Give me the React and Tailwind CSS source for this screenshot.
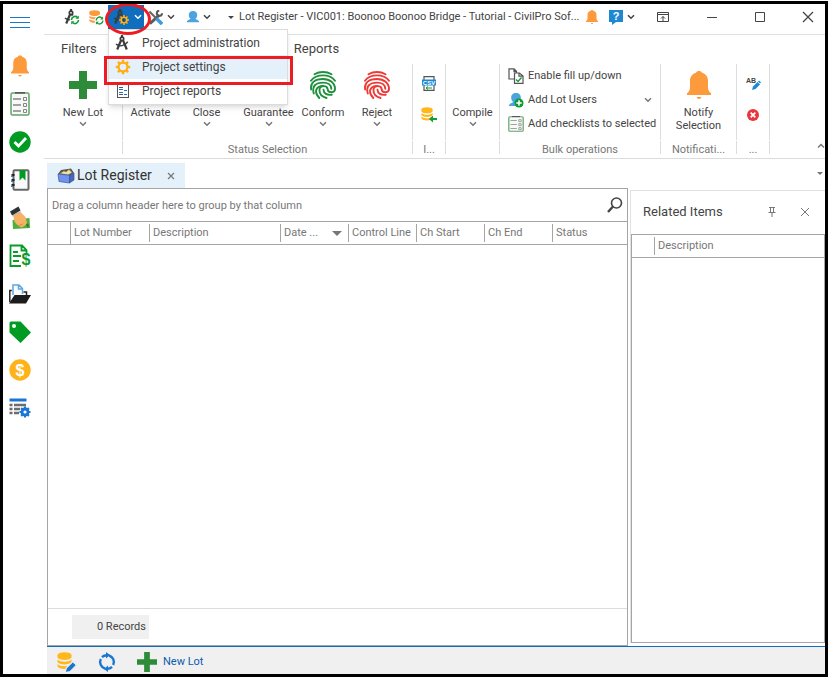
const gridColumns = [
  { label: "", width: "w-[22px]" },
  { label: "Lot Number", width: "w-[79px]", full: true },
  { label: "Description", width: "w-[131px]" },
  { label: "Date ...", width: "w-[68px]", sorted: true },
  { label: "Control Line", width: "w-[68px]" },
  { label: "Ch Start", width: "w-[68px]" },
  { label: "Ch End", width: "w-[68px]" },
  { label: "Status", width: "" },
];

function Chevron({ className = "text-[#444]", up = false }) {
  return (
    <svg viewBox="0 0 8 6" className={`w-2 h-1.5 shrink-0 ${className}`} fill="none" stroke="currentColor" strokeWidth="1.5">
      <path d={up ? "M1 4.5L4 1.5L7 4.5" : "M1 1.2L4 4.2L7 1.2"} />
    </svg>
  );
}

function Caret({ className = "w-[7px] h-1" }) {
  return (
    <svg viewBox="0 0 8 4" preserveAspectRatio="none" className={`shrink-0 ${className}`}>
      <path d="M0 0H8L4 4Z" fill="currentColor" />
    </svg>
  );
}

function Bell({ className }) {
  return (
    <svg viewBox="0 0 24 28" className={className} fill="#fd9a3c">
      <path d="M12 0c1.500 0 2.500.6 3 1.700C19.200 3 21 6 21 10v6c0 3 .8 4.500 3 6.300V24H0v-1.700C2.200 20.500 3 19 3 16v-6c0-4 1.800-7 6-8.300C9.500.6 10.500 0 12 0z" />
      <path d="M9.500 26h5c-.5 1.300-1.500 2-2.500 2s-2-.7-2.500-2z" />
    </svg>
  );
}

function Plus({ className }) {
  return (
    <svg viewBox="0 0 28 28" className={className}>
      <path d="M10 0h8v10h10v8H18v10h-8V18H0v-8h10z" fill="#2e8b3a" />
    </svg>
  );
}

function Compass({ className, children }) {
  return (
    <svg viewBox="0 0 16 16" className={className} fill="none">
      <path d="M7 0v2.500M6.200 5L2.200 14.500M7.900 5l3.900 9.500" stroke="#3c3c3c" strokeWidth="2.200" />
      <circle cx="7" cy="3.800" r="1.700" stroke="#3c3c3c" strokeWidth="1.700" />
      <path d="M1 9.200c3.800 2.600 8.500 1.800 11.800-2.400" stroke="#3c3c3c" strokeWidth="1.500" />
      {children}
    </svg>
  );
}

function Gear({ className, color = "#ffae14" }) {
  return (
    <svg viewBox="0 0 16 16" className={className} fill="none" stroke={color}>
      <circle cx="8" cy="8" r="4.400" strokeWidth="2.200" />
      <path
        d="M8 .8v2.200M8 13v2.200M.8 8H3M13 8h2.200M2.900 2.900l1.600 1.600M11.500 11.500l1.600 1.600M2.900 13.100l1.600-1.600M11.500 4.500l1.600-1.600"
        strokeWidth="2.400"
      />
    </svg>
  );
}

function Database({ className, color = "#ffb71c", children }) {
  return (
    <svg viewBox="0 0 20 20" className={className} fill="none">
      <ellipse cx="7.500" cy="3" rx="7" ry="2.800" fill={color} />
      <path d="M.5 3v2.500C2 8.700 13 8.700 14.500 5.500V3zM.5 7.500V10c1.500 3.200 12.500 3.200 14 0V7.500c-2.500 3-11.500 3-14 0zM.5 12v2.500c1.500 3.200 12.500 3.200 14 0V12c-2.500 3-11.500 3-14 0z" fill={color} />
      {children}
    </svg>
  );
}

function Person({ className, children }) {
  return (
    <svg viewBox="0 0 16 16" className={className}>
      <path d="M8 1c3.200 0 5 2 4.800 5-.1 2-1 3.200-2 4.100.3 1 3.900.9 4.400 3.900H.8c.5-3 4.100-2.900 4.400-3.900-1-.9-1.900-2.100-2-4.100C3 3 4.800 1 8 1z" fill="#4ba3df" />
      {children}
    </svg>
  );
}

function Checklist({ className }) {
  return (
    <svg viewBox="0 0 20 24" preserveAspectRatio="none" className={className} fill="none">
      <rect x="1" y="1" width="18" height="22" rx="1.500" fill="#f7f9f7" stroke="#62a36b" strokeWidth="1.500" />
      <path d="M5 .8h10" stroke="#555" strokeWidth="1.500" />
      <path d="M3 7h8M3 13h8M3 19h8" stroke="#858585" strokeWidth="1.300" />
      <path d="M13.500 5.500h3v3h-3zM13.500 11.500h3v3h-3zM13.500 17.500h3v3h-3z" stroke="#858585" />
    </svg>
  );
}

function ReportIcon({ className }) {
  return (
    <svg viewBox="0 0 14 14" className={className} fill="none">
      <rect x="1.500" y=".5" width="11" height="13" fill="#fff" stroke="#555" />
      <path d="M3 3.500h4M3 10.500h4" stroke="#555" />
      <path d="M3 5.500h4M3 8.500h4M8 6.500h3M8 10.500h3" stroke="#1976d2" />
    </svg>
  );
}

function Fingerprint({ color }) {
  return (
    <svg viewBox="0 0 26 28" className="w-[26px] h-7" fill="none" stroke={color} strokeWidth="1.900" strokeLinecap="round">
      <path d="M4.500 3.200C9.500.3 16.500.3 21.500 3.200" />
      <path d="M1 9.800C6 2.600 20 2.600 25 9.800" />
      <path d="M1.200 18.500C-.2 11.500 5.500 8 13 8c7 0 12 4 12 10 0 4-6.800 4.500-7.300.3-.4-4.300-8-4.300-8.200.5-.2 4.300 3 7.200 7 8.200" />
      <path d="M3.800 22.500C1.500 15 6 11.600 13 11.600c5 0 8.300 2.600 8.300 6.200" />
      <path d="M9.300 27C3.500 20.500 6 15.200 13 15" />
      <path d="M13.500 18.700c.2 3.800 3.500 5.800 8.300 5" />
    </svg>
  );
}

const sidebarItems = [
  { label: "Notifications", icon: <Bell className="w-[18px] h-[22px]" /> },
  { label: "Checklists", icon: <Checklist className="w-5 h-6" /> },
  {
    label: "Approvals",
    icon: (
      <svg viewBox="0 0 22 22" className="w-[22px] h-[22px]" fill="none">
        <circle cx="11" cy="11" r="10.700" fill="#009b22" />
        <path d="M5.500 11l4 4 7.500-8" stroke="#fff" strokeWidth="2.800" />
      </svg>
    ),
  },
  {
    label: "Diary",
    icon: (
      <svg viewBox="0 0 20 22" className="w-5 h-[22px]" fill="none">
        <rect x="3.500" y="1.200" width="15" height="19.500" rx="1" fill="#fafafa" stroke="#686868" strokeWidth="2" />
        <path d="M9.500 1h6v10.500l-3-3-3 3z" fill="#009b22" />
        <path d="M1.500 6h3M1.500 11h3M1.500 16h3" stroke="#222" strokeWidth="1.800" />
        <path d="M1 7.300h2M1 12.300h2M1 17.300h2" stroke="#2b86c5" strokeWidth="1.200" />
      </svg>
    ),
  },
  {
    label: "Payments",
    icon: (
      <svg viewBox="0 0 20 24" className="w-5 h-6">
        <path d="M2.500 14l17-2 .5 10-17 1z" fill="#4caf3f" />
        <path d="M14 15l5 4-1 3z" fill="#2f7d2a" />
        <path d="M3 8.500L10 5.500l5.500 5.500 1.500 6c-1 2-3.500 4-5.500 4.500-3-1-7.500-5-7.500-8z" fill="#f6b266" />
        <path d="M8 20c2-1 4-1 5-2.500" stroke="#d98b3c" fill="none" />
        <path d="M0 5.500L8.500.5 10.500 4.500 2 9.500z" fill="#2d3036" />
        <path d="M2.500 10l8-4.500" stroke="#bbb" strokeWidth="1" />
      </svg>
    ),
  },
  {
    label: "Cost report",
    icon: (
      <svg viewBox="0 0 22 24" className="w-[22px] h-6 overflow-visible" fill="none" stroke="#0b9b2c" strokeWidth="1.800">
        <path d="M12 22H1.500V1.500H13l4.500 4.500v3M12.500 1.500v5h5M4 8h5M4 12h8M4 17h6" />
        <text x="12.500" y="21" fill="#0b9b2c" stroke="none" className="font-['Liberation_Sans'] text-[16px] font-bold">$</text>
      </svg>
    ),
  },
  {
    label: "Documents",
    icon: (
      <svg viewBox="0 0 22 20" className="w-[22px] h-5">
        <path d="M4 11V1h6l3.500 3.500V10M9.500 1v4H14" fill="#fff" stroke="#5aa7e6" strokeWidth="1.500" />
        <path d="M.8 18V6.500h2M14.500 8h3v3" fill="none" stroke="#222" strokeWidth="1.500" />
        <path d="M0 19.500L5.500 11H22l-5 8.500z" fill="#1c1c1c" />
      </svg>
    ),
  },
  {
    label: "Tags",
    icon: (
      <svg viewBox="0 0 22 22" className="w-[22px] h-[22px]">
        <path d="M2 .5h9.500L22 11.500 11.500 22 .5 11.500V2A1.500 1.500 0 0 1 2 .5zM5 3a2 2 0 1 0 0 4 2 2 0 0 0 0-4z" fill="#009b22" fillRule="evenodd" />
      </svg>
    ),
  },
  {
    label: "Costs",
    icon: (
      <svg viewBox="0 0 22 22" className="w-[22px] h-[22px]">
        <circle cx="11" cy="11" r="10.700" fill="#ffb31a" />
        <text x="11" y="16.500" textAnchor="middle" fill="#fff" className="font-['Liberation_Sans'] text-[16px] font-bold">$</text>
      </svg>
    ),
  },
  {
    label: "Register settings",
    icon: (
      <svg viewBox="0 0 22 20" className="w-[22px] h-5" fill="none">
        <path d="M.5 2h17" stroke="#1976d2" strokeWidth="3" />
        <path d="M.5 7h3M5 7h12M.5 11h3M5 11h6M.5 15h3M5 15h5" stroke="#6d6d6d" strokeWidth="2.400" />
        <circle cx="16" cy="14" r="3" stroke="#1976d2" strokeWidth="2.800" />
        <path d="M16 8.500v2.500M16 17v2.500M10.500 14h2.500M19 14h2.500M12.100 10.100l1.500 1.500M18.400 16.400l1.500 1.500M12.100 17.900l1.500-1.500M18.400 11.600l1.500-1.500" stroke="#1976d2" strokeWidth="2.200" />
      </svg>
    ),
  },
];

function Sidebar() {
  return (
    <nav className="w-[41px] shrink-0 flex flex-col items-center pr-[7px]">
      <button aria-label="Menu" className="h-[43px] pb-[7px] shrink-0">
        <svg viewBox="0 0 20 12" className="w-5 h-3" stroke="#1b76c8">
          <path d="M0 1.500h20M0 6.500h20M0 11.500h20" />
        </svg>
      </button>
      {sidebarItems.map((item) => (
        <button key={item.label} aria-label={item.label} className="h-[38px] shrink-0 flex items-center">
          {item.icon}
        </button>
      ))}
    </nav>
  );
}

function ProjectMenu() {
  return (
    <div className="relative w-9 h-6 ml-1 shrink-0">
      <button aria-label="Project" className="w-full h-full bg-[#106ebe] flex items-center gap-1 pl-1">
        <Compass className="w-[18px] h-4">
          <circle cx="11" cy="11" r="2.800" stroke="#ffb31a" strokeWidth="1.600" />
          <path d="M11 6v2M11 14v2M6 11h2M14 11h2M7.500 7.500L9 9M13 13l1.500 1.500M7.500 14.500L9 13M13 9l1.500-1.500" stroke="#ffb31a" strokeWidth="1.500" />
        </Compass>
        <Chevron className="text-white" />
      </button>
      <div className="absolute z-10 -left-[3px] -top-[2px] w-[46px] h-8 rounded-[50%] border-[3px] border-[#ec1c24] pointer-events-none" />
      <div className="absolute left-0 top-full w-[180px] bg-white border border-[#dcdcdc] shadow-md py-px text-[12px] text-[#444]">
        <button className="w-full h-6 flex items-center gap-[11px] pl-1.5">
          <Compass className="w-4 h-4" />
          Project administration
        </button>
        <button className="w-full h-6 flex items-center gap-[11px] pl-1.5 bg-[#e5f1fa]">
          <Gear className="w-4 h-4" />
          Project settings
        </button>
        <button className="w-full h-6 flex items-center gap-[11px] pl-1.5">
          <ReportIcon className="w-4 h-3.5" />
          Project reports
        </button>
        <div className="absolute -left-[5px] top-[26px] w-[189px] h-[29px] border-[3px] border-[#ec1c24] pointer-events-none" />
      </div>
    </div>
  );
}

function TitleBar() {
  return (
    <header className="h-[31px] shrink-0 pb-1 border-b border-[#e1e1e1] flex items-center text-[#444] pl-5">
      <button aria-label="Refresh project">
        <Compass className="w-4 h-4">
          <circle cx="11" cy="11" r="5" fill="#fff" />
          <path d="M7.500 11a3.500 3.500 0 0 1 6-2.500M14.500 11a3.500 3.500 0 0 1-6 2.500" stroke="#159b38" strokeWidth="1.600" />
          <path d="M14.800 6.500v3.300h-3.300zM7.200 15.500v-3.300h3.300z" fill="#159b38" />
        </Compass>
      </button>
      <button aria-label="Refresh data" className="ml-[9px]">
        <Database className="w-[15px] h-[15px]" color="#fd9a3c">
          <circle cx="14" cy="14" r="6.500" fill="#fff" />
          <path d="M9.500 14a4.500 4.500 0 0 1 7.700-3.200M18.500 14a4.500 4.500 0 0 1-7.700 3.200" stroke="#159b38" strokeWidth="1.800" />
          <path d="M18.800 8.500v4h-4zM9.200 19.500v-4h4z" fill="#159b38" />
        </Database>
      </button>
      <ProjectMenu />
      <button aria-label="Tools" className="ml-1 flex items-center gap-1">
        <svg viewBox="0 0 16 16" className="w-[15px] h-[15px]" fill="none">
          <path d="M12 5.500L2 14.500" stroke="#5a5a5a" strokeWidth="3" />
          <path d="M15 3.500a2.800 2.800 0 1 1-3-2.800" stroke="#5a5a5a" strokeWidth="2.200" />
          <path d="M1.500 1.500L9 9" stroke="#666" strokeWidth="2.200" />
          <path d="M9 9l6 6" stroke="#3d9be0" strokeWidth="3.800" />
        </svg>
        <Chevron />
      </button>
      <button aria-label="User" className="ml-[11px] flex items-center gap-[3px]">
        <Person className="w-3.5 h-3.5" />
        <Chevron />
      </button>
      <button aria-label="Customize toolbar" className="ml-[17px]">
        <Caret className="w-1.5 h-[3px]" />
      </button>
      <h1 className="ml-[5px] pt-px flex-1 min-w-0 whitespace-nowrap">
        Lot Register - VIC001: Boonoo Boonoo Bridge - Tutorial - CivilPro Sof...
      </h1>
      <button aria-label="Alerts">
        <Bell className="w-3 h-3.5" />
      </button>
      <button aria-label="Help" className="ml-[11px] flex items-center gap-1">
        <svg viewBox="0 0 14 15" className="w-3.5 h-[15px]">
          <path d="M0 0h14v12H7l-4 3v-3H0z" fill="#1e88d2" />
          <text x="7" y="10" textAnchor="middle" fill="#fff" className="font-['Liberation_Sans'] text-[11px] font-bold">?</text>
        </svg>
        <Chevron />
      </button>
      <button aria-label="Ribbon display options" className="ml-[22px]">
        <svg viewBox="0 0 12 11" className="w-3 h-[11px]" fill="none" stroke="#444">
          <path d="M.5.5h11v9H.5zM.5 2.500h11M6 9V4.500M4 6.500l2-2 2 2" />
        </svg>
      </button>
      <button aria-label="Minimize" className="ml-[37px]">
        <svg viewBox="0 0 12 12" className="w-3 h-3" stroke="#444"><path d="M1 6.500h10" /></svg>
      </button>
      <button aria-label="Maximize" className="ml-9">
        <svg viewBox="0 0 12 12" className="w-3 h-3" fill="none" stroke="#444"><path d="M1.500 1.500h9v9h-9z" /></svg>
      </button>
      <button aria-label="Close" className="ml-9 mr-[11px]">
        <svg viewBox="0 0 12 12" className="w-3 h-3" stroke="#444" strokeWidth="1.300"><path d="M1 1l10 10M11 1L1 11" /></svg>
      </button>
    </header>
  );
}

function RibbonGroup({ title, width, children }) {
  return (
    <section className={`${width} shrink-0 flex flex-col gap-px pt-0.5 pb-1`}>
      <div className="h-[76px] border-r border-[#dcdcdc] flex">{children}</div>
      <h2 className="h-[13px] leading-[18px] border-r border-[#dcdcdc] text-center text-[#777] whitespace-nowrap">{title}</h2>
    </section>
  );
}

function RibbonButton({ label, width = "w-full", icon, arrow = true }) {
  return (
    <button className={`${width} pt-[7px] flex flex-col items-center justify-start`}>
      <span className="h-7 flex items-center">{icon}</span>
      <span className="mt-[7px] mb-0.5 leading-[13px]">{label}</span>
      {arrow && <Chevron className="text-[#777]" />}
    </button>
  );
}

function Ribbon() {
  return (
    <div className="h-[97px] shrink-0 flex border-b border-[#dcdcdc] text-[#444]">
      <RibbonGroup width="w-[79px]">
        <RibbonButton label="New Lot" icon={<Plus className="w-7 h-7" />} />
      </RibbonGroup>
      <RibbonGroup width="w-[290px]" title="Status Selection">
        <RibbonButton label="Activate" width="w-[55px]" arrow={false} />
        <RibbonButton label="Close" width="w-[57px]" />
        <RibbonButton label="Guarantee" width="w-[67px]" />
        <RibbonButton label="Conform" width="w-[42px]" icon={<Fingerprint color="#1f8f3c" />} />
        <RibbonButton label="Reject" width="w-[66px]" icon={<Fingerprint color="#ee3a36" />} />
      </RibbonGroup>
      <RibbonGroup width="w-[33px]" title="I...">
        <div className="w-full flex flex-col items-center gap-4 pt-3">
          <button aria-label="Import CSV">
            <svg viewBox="0 0 14 15" className="w-3.5 h-[15px]" fill="none">
              <path d="M2 .7h10v13.600H2z" fill="#fff" stroke="#555" strokeWidth="1.200" />
              <path d="M0 3.500h14v6H0z" fill="#1e88d2" />
              <text x="7" y="8.600" textAnchor="middle" fill="#fff" className="font-['Liberation_Sans'] text-[6px] font-bold">CSV</text>
              <path d="M4 12h6M6 10.500L4 12l2 1.500" stroke="#159b38" />
            </svg>
          </button>
          <button aria-label="Import from database">
            <Database className="w-4 h-4">
              <path d="M20 15h-6" stroke="#159b38" strokeWidth="2.600" />
              <path d="M15 10.500L10 15l5 4.500z" fill="#159b38" />
            </Database>
          </button>
        </div>
      </RibbonGroup>
      <RibbonGroup width="w-[54px]">
        <RibbonButton label="Compile" />
      </RibbonGroup>
      <RibbonGroup width="w-[161px]" title="Bulk operations">
        <div className="w-full flex flex-col pl-2">
          <button className="h-6 flex items-center gap-1 whitespace-nowrap">
            <svg viewBox="0 0 16 16" className="w-4 h-4" fill="#fff" stroke="#555" strokeWidth="1.200">
              <path d="M1 .8h5l2.500 2.500V11H1zM6 .8v2.800h2.500" />
              <path d="M6.500 5h5L15 8v7.300H6.500zM11 5v3.200h4" />
              <path d="M8 11.500l2 2 3.500-4" fill="none" stroke="#159b38" strokeWidth="1.400" />
            </svg>
            <span className="pt-px">Enable fill up/down</span>
          </button>
          <button className="h-6 flex items-center gap-1 whitespace-nowrap">
            <Person className="w-4 h-4">
              <circle cx="11" cy="11" r="4.500" fill="#0d9b30" />
              <path d="M11 8.300v5.400M8.300 11h5.400" stroke="#fff" strokeWidth="1.500" />
            </Person>
            <span className="pt-px">Add Lot Users</span>
            <Chevron className="text-[#777] ml-auto mr-2" />
          </button>
          <button className="h-6 flex items-center gap-1 whitespace-nowrap">
            <Checklist className="w-4 h-4" />
            <span className="pt-px">Add checklists to selected</span>
          </button>
        </div>
      </RibbonGroup>
      <RibbonGroup width="w-[76px]" title="Notificati...">
        <RibbonButton label={<>Notify<br />Selection</>} arrow={false} icon={<Bell className="w-6 h-7" />} />
      </RibbonGroup>
      <RibbonGroup width="w-[33px]" title="...">
        <div className="w-full flex flex-col items-center gap-[18px] pt-[13px]">
          <button aria-label="Rename">
            <svg viewBox="0 0 15 14" className="w-[15px] h-3.5">
              <text x="0" y="6" fill="#444" className="font-['Liberation_Sans'] text-[7px] font-bold">AB</text>
              <path d="M6 13l1-3.500 4.500-4.500 2.500 2.500L9.500 12z" fill="#1e88d2" />
              <path d="M12 4.500l1-1L15 5.500l-1 1z" fill="#1e88d2" />
            </svg>
          </button>
          <button aria-label="Delete">
            <svg viewBox="0 0 12 12" className="w-3 h-3">
              <circle cx="6" cy="6" r="6" fill="#e8383d" />
              <path d="M3.700 3.700l4.600 4.600M8.300 3.700L3.700 8.300" stroke="#fff" strokeWidth="1.800" />
            </svg>
          </button>
        </div>
      </RibbonGroup>
      <button aria-label="Collapse ribbon" className="ml-auto self-end pb-[9px]">
        <Chevron up className="text-[#777]" />
      </button>
    </div>
  );
}

function TabStrip() {
  return (
    <div className="h-[29px] shrink-0 pt-1 pl-[3px] pr-0.5 flex items-center justify-between text-[#777]">
      <div className="h-[25px] w-[138px] bg-[#e5f1fa] flex items-center pl-2.5">
        <svg viewBox="0 0 18 16" className="w-[18px] h-4">
          <path d="M1 6l3-4 10-1.500L17 5l-4 3z" fill="#59563f" />
          <path d="M3 5.500l4-2.500 2 1 3-2.500 3 3-4 2.500z" fill="#f0e3a8" stroke="#8b8461" strokeWidth=".6" />
          <path d="M1 6l11.500 1.200V15L2 13.500z" fill="#6f93ee" stroke="#3c5193" strokeWidth=".7" />
          <path d="M12.500 7.200L17 5v7l-4.500 3z" fill="#4766bd" stroke="#3c5193" strokeWidth=".7" />
        </svg>
        <span className="ml-0.5 text-[14px] text-[#333] whitespace-nowrap">Lot Register</span>
        <button aria-label="Close tab" className="ml-auto mr-2.5">
          <svg viewBox="0 0 8 8" className="w-2 h-2" stroke="#777" strokeWidth="1.200"><path d="M1 1l6 6M7 1L1 7" /></svg>
        </button>
      </div>
      <button aria-label="Open tabs" className="pb-1"><Caret className="w-1.5 h-[3px]" /></button>
    </div>
  );
}

function LotGrid() {
  return (
    <main className="flex-1 min-w-0 border border-[#a5a5a5] flex flex-col">
      <div className="h-8 shrink-0 flex items-center justify-between px-1 text-[#777]">
        <span className="pt-0.5">Drag a column header here to group by that column</span>
        <button aria-label="Search">
          <svg viewBox="0 0 16 16" className="w-4 h-4" fill="none" stroke="#444">
            <circle cx="9.500" cy="6" r="5" strokeWidth="1.600" />
            <path d="M6 9.500L1 15" strokeWidth="2.400" />
          </svg>
        </button>
      </div>
      <table className="w-full table-fixed border-y border-[#a5a5a5] border-separate border-spacing-0">
        <thead>
          <tr>
            {gridColumns.map((col) => (
              <th key={col.label} className={`${col.width} h-[22px] p-0 font-normal text-left text-[#777]`}>
                {col.label && (
                  <div className={`${col.full ? "h-[22px]" : "h-[18px]"} pt-px border-l border-[#a5a5a5] pl-[3px] flex items-center justify-between whitespace-nowrap`}>
                    {col.label}
                    {col.sorted && <Caret className="w-2.5 h-[5px] mr-1.5" />}
                  </div>
                )}
              </th>
            ))}
          </tr>
        </thead>
      </table>
      <div className="flex-1" />
      <footer className="h-[37px] shrink-0 border-t border-[#dcdcdc] pl-6 pt-1.5">
        <div className="w-[77px] h-6 pt-px bg-[#f0f0f0] flex items-center justify-end pr-[3px] text-[#444]">0 Records</div>
      </footer>
    </main>
  );
}

function RelatedItems() {
  return (
    <aside className="w-[195px] shrink-0 ml-0.5 mt-0.5 mb-[3px] border-l border-t border-[#e1e1e1] flex flex-col">
      <div className="h-[43px] shrink-0 flex items-center pl-3 pr-[15px] pb-0.5">
        <h2 className="text-[13px] text-[#444] flex-1">Related Items</h2>
        <button aria-label="Pin" className="mr-6">
          <svg viewBox="0 0 8 10" className="w-2 h-2.5" fill="none" stroke="#777">
            <path d="M1 .5h6M2.500.5v5M5.500.5v5M.5 5.500h7M4 5.500V10" />
          </svg>
        </button>
        <button aria-label="Close panel">
          <svg viewBox="0 0 10 10" className="w-2.5 h-2.5" stroke="#777"><path d="M1 1l8 8M9 1L1 9" /></svg>
        </button>
      </div>
      <div className="flex-1 border border-[#a5a5a5]">
        <table className="w-full table-fixed border-b border-[#a5a5a5] border-separate border-spacing-0">
          <thead>
            <tr>
              <th className="w-[22px] h-[22px] p-0" />
              <th className="p-0 font-normal text-left text-[#777]">
                <div className="h-[18px] pt-px border-l border-[#a5a5a5] pl-[3px] flex items-center">Description</div>
              </th>
            </tr>
          </thead>
        </table>
      </div>
    </aside>
  );
}

function StatusBar() {
  return (
    <footer className="ml-[3px] h-7 shrink-0 bg-[#f0f0f0] border-t border-[#106ebe] flex items-center pl-2.5 pt-[3px]">
      <button aria-label="Edit data">
        <Database className="w-5 h-5">
          <path d="M8 20.500l1.300-4.500 6.500-6.500 3.700 3.700-6.500 6.500z" fill="#1976d2" stroke="#f0f0f0" strokeWidth="1.200" />
        </Database>
      </button>
      <button aria-label="Refresh" className="ml-5">
        <svg viewBox="0 0 20 20" className="w-5 h-5" fill="none" stroke="#1976d2" strokeWidth="2.400">
          <path d="M8 16.500a6.800 6.800 0 0 1-4.200-9.500M5 5.200A6.800 6.800 0 0 1 10 3.200M12 3.500a6.800 6.800 0 0 1 4.200 9.500M15 14.800a6.800 6.800 0 0 1-5 2" />
          <path d="M9 0l4 3-4 3.500zM11 13.500V20l-4-3z" fill="#1976d2" stroke="none" />
        </svg>
      </button>
      <button className="ml-5 flex items-center gap-1.5 text-[#0b5cad]">
        <Plus className="w-5 h-5" />
        <span className="pt-px">New Lot</span>
      </button>
    </footer>
  );
}

export default function App() {
  return (
    <div className="h-screen py-px bg-white font-[Roboto,sans-serif] text-[11px]">
      <div className="h-full border-[3px] border-black flex overflow-hidden">
        <Sidebar />
        <div className="flex-1 min-w-0 flex flex-col">
          <TitleBar />
          <nav className="h-[27px] shrink-0 flex items-center px-[17px] text-[13px] text-[#444]">
            <button>Filters</button>
            <button className="ml-[197px]">Reports</button>
          </nav>
          <Ribbon />
          <TabStrip />
          <div className="flex-1 min-h-0 flex pl-[3px]">
            <LotGrid />
            <RelatedItems />
          </div>
          <StatusBar />
        </div>
      </div>
    </div>
  );
}
